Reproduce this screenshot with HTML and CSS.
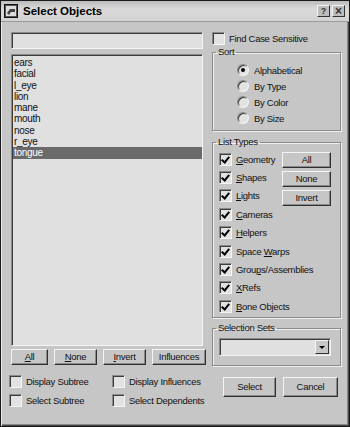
FILE: index.html
```html
<html>
<head>
<title>Select Objects</title>
<link rel="stylesheet" href="styles.css">
</head>
<body>
<div class="window">
	<div class="titlebar">
		<svg class="appicon" width="14" height="14" viewBox="0 0 14 14">
			<rect x="0.5" y="0.5" width="13" height="13" fill="#555" stroke="#111"/>
			<rect x="2" y="2" width="10" height="10" fill="#ddd"/>
			<path d="M3 9 L6 5 L11 5 L11 8 L7 8 L5 11 Z" fill="#444"/>
		</svg>
		<span class="title">Select Objects</span>
		<span class="tbtn">?</span>
		<span class="tbtn close">&#215;</span>
	</div>
	<div class="body">
		<div class="left">
			<div class="search sunken"></div>
			<div class="list sunken">
				<div class="item">ears</div>
				<div class="item">facial</div>
				<div class="item">l_eye</div>
				<div class="item">lion</div>
				<div class="item">mane</div>
				<div class="item">mouth</div>
				<div class="item">nose</div>
				<div class="item">r_eye</div>
				<div class="item sel">tongue</div>
			</div>
			<div class="btnrow">
				<span class="btn w-all"><u>A</u>ll</span>
				<span class="btn w-none"><u>N</u>one</span>
				<span class="btn w-inv"><u>I</u>nvert</span>
				<span class="btn w-infl">Influences</span>
			</div>
			<div class="checks">
				<label class="chk"><span class="box"></span><span>Display Subtree</span></label>
				<label class="chk"><span class="box"></span><span>Display Influences</span></label>
				<label class="chk"><span class="box"></span><span>Select Subtree</span></label>
				<label class="chk"><span class="box"></span><span>Select Dependents</span></label>
			</div>
		</div>
		<div class="right">
			<label class="chk findcase"><span class="box"></span><span>Find Case Sensitive</span></label>
			<fieldset class="group sort">
				<legend>Sort</legend>
				<div class="radios">
					<div class="radio"><span class="dot on"></span><span>Alphabetical</span></div>
					<div class="radio"><span class="dot"></span><span>By Type</span></div>
					<div class="radio"><span class="dot"></span><span>By Color</span></div>
					<div class="radio"><span class="dot"></span><span>By Size</span></div>
				</div>
			</fieldset>
			<fieldset class="group types">
				<legend>List Types</legend>
				<div class="typewrap">
					<div class="typelist">
						<label class="chk"><span class="box checked"></span><span><u>G</u>eometry</span></label>
						<label class="chk"><span class="box checked"></span><span><u>S</u>hapes</span></label>
						<label class="chk"><span class="box checked"></span><span><u>L</u>ights</span></label>
						<label class="chk"><span class="box checked"></span><span><u>C</u>ameras</span></label>
						<label class="chk"><span class="box checked"></span><span><u>H</u>elpers</span></label>
						<label class="chk"><span class="box checked"></span><span>Space <u>W</u>arps</span></label>
						<label class="chk"><span class="box checked"></span><span>Grou<u>p</u>s/Assemblies</span></label>
						<label class="chk"><span class="box checked"></span><span><u>X</u>Refs</span></label>
						<label class="chk"><span class="box checked"></span><span><u>B</u>one Objects</span></label>
					</div>
					<div class="typebtns">
						<span class="btn">All</span>
						<span class="btn">None</span>
						<span class="btn">Invert</span>
					</div>
				</div>
			</fieldset>
			<fieldset class="group sets">
				<legend>Selection Sets</legend>
				<div class="combo sunken"><span class="arrow"></span></div>
			</fieldset>
			<div class="okrow">
				<span class="btn big w-sel">Select</span>
				<span class="btn big w-cancel">Cancel</span>
			</div>
		</div>
	</div>
</div>
</body>
</html>
```
FILE: styles.css
```css
body {
	margin: 0;
	background: #000;
	font-family: "Liberation Sans", Arial, sans-serif;
	font-size: 9.5px;
	letter-spacing: -0.3px;
	color: #111;
}
.window {
	width: 350px;
	height: 427px;
	box-sizing: border-box;
	background: #c6c6c6;
	border: 1px solid #1a1a1a;
	box-shadow: inset 1px 1px 0 #e8e8e8, inset -1px -1px 0 #444, inset -2px -2px 0 #888;
	overflow: hidden;
}
.titlebar {
	height: 20px;
	display: flex;
	align-items: center;
	padding: 0 4px 0 3px;
	background: linear-gradient(#bcbcbc, #dadada 40%, #d2d2d2);
	border-bottom: 1px solid #9a9a9a;
}
.appicon {
	margin-right: 5px;
}
.title {
	flex: 1;
	font-weight: bold;
	font-size: 11.5px;
	letter-spacing: 0;
	color: #000;
}
.tbtn {
	width: 13px;
	height: 12px;
	margin-left: 2px;
	box-sizing: border-box;
	background: #bdbdbd;
	border: 1px solid;
	border-color: #f2f2f2 #333 #333 #f2f2f2;
	font-weight: bold;
	font-size: 9px;
	letter-spacing: 0;
	line-height: 10px;
	text-align: center;
	color: #333;
}
.tbtn.close {
	font-size: 12px;
}
.body {
	display: flex;
	padding: 0 0 0 10px;
}
.left {
	width: 195px;
}
.right {
	width: 129px;
	margin-left: 6px;
}
.sunken {
	box-sizing: border-box;
	background: #e0e0e0;
	border: 1px solid;
	border-color: #8a8a8a #f4f4f4 #f4f4f4 #8a8a8a;
	box-shadow: inset 1px 1px 0 #3c3c3c;
}
.search {
	margin-top: 10px;
	width: 192px;
	height: 17px;
}
.list {
	margin-top: 5px;
	width: 192px;
	height: 292px;
	padding: 2px 0 0 1px;
	font-size: 10px;
}
.item {
	height: 11.3px;
	line-height: 11px;
	padding-left: 1px;
	white-space: nowrap;
}
.item.sel {
	background: #6a6a6a;
	color: #fff;
}
.btn {
	display: inline-block;
	box-sizing: border-box;
	height: 16px;
	line-height: 13px;
	text-align: center;
	background: #c6c6c6;
	border: 1px solid;
	border-color: #f4f4f4 #303030 #303030 #f4f4f4;
	box-shadow: inset -1px -1px 0 #8a8a8a;
	color: #111;
}
.btnrow {
	margin-top: 3px;
	display: flex;
	gap: 6px;
}
.w-all { width: 37px; }
.w-none { width: 43px; }
.w-inv { width: 43px; }
.w-infl { width: 54px; }
.checks {
	margin: 10px 0 0 -2px;
	display: grid;
	grid-template-columns: 103px auto;
	row-gap: 6px;
}
.chk {
	display: flex;
	align-items: center;
	height: 13px;
	white-space: nowrap;
}
.box {
	flex: none;
	width: 13px;
	height: 13px;
	margin-right: 4px;
	box-sizing: border-box;
	background: #e2e2e2;
	border: 1px solid;
	border-color: #8a8a8a #f4f4f4 #f4f4f4 #8a8a8a;
	box-shadow: inset 1px 1px 0 #3c3c3c;
	position: relative;
}
.box.checked::after {
	content: "";
	position: absolute;
	left: 2px;
	top: 1px;
	width: 3px;
	height: 6px;
	border: solid #000;
	border-width: 0 2px 2px 0;
	transform: translate(1px, 0) rotate(40deg);
}
.findcase {
	margin-top: 10px;
}
.group {
	margin: 0;
	padding: 0;
	box-sizing: border-box;
	border: 1px solid #8a8a8a;
	box-shadow: 1px 1px 0 #f0f0f0, inset 1px 1px 0 #f0f0f0;
}
.group legend {
	margin-left: 3px;
	padding: 0 2px;
	line-height: 12px;
}
.sort {
	margin-top: 1px;
	height: 85px;
}
.radios {
	padding: 4px 0 0 24px;
}
.radio {
	display: flex;
	align-items: center;
	height: 16px;
}
.dot {
	width: 12px;
	height: 12px;
	margin-right: 5px;
	box-sizing: border-box;
	border-radius: 50%;
	background: #e2e2e2;
	border: 1px solid;
	border-color: #8a8a8a #f4f4f4 #f4f4f4 #8a8a8a;
	box-shadow: inset 1px 1px 0 #3c3c3c;
	position: relative;
}
.dot.on::after {
	content: "";
	position: absolute;
	left: 3px;
	top: 3px;
	width: 4px;
	height: 4px;
	border-radius: 50%;
	background: #000;
}
.types {
	margin-top: 5px;
	height: 182px;
}
.typewrap {
	display: flex;
	padding: 2px 0 0 6px;
}
.typelist {
	width: 63px;
	display: flex;
	flex-direction: column;
}
.typelist .chk {
	height: 18.4px;
}
.typebtns {
	display: flex;
	flex-direction: column;
	gap: 3px;
	padding-top: 2px;
}
.typebtns .btn {
	width: 49px;
}
.sets {
	margin-top: 4px;
	height: 44px;
}
.combo {
	margin: 4px 0 0 6px;
	width: 112px;
	height: 18px;
	position: relative;
}
.arrow {
	position: absolute;
	right: 1px;
	top: 1px;
	width: 14px;
	height: 14px;
	box-sizing: border-box;
	background: #c6c6c6;
	border: 1px solid;
	border-color: #f4f4f4 #303030 #303030 #f4f4f4;
}
.arrow::after {
	content: "";
	position: absolute;
	left: 3px;
	top: 5px;
	border: 3px solid transparent;
	border-top: 3px solid #000;
}
.okrow {
	margin: 11px 0 0 11px;
	display: flex;
	gap: 7px;
}
.big {
	height: 20px;
	line-height: 17px;
}
.w-sel { width: 53px; }
.w-cancel { width: 55px; }
```
